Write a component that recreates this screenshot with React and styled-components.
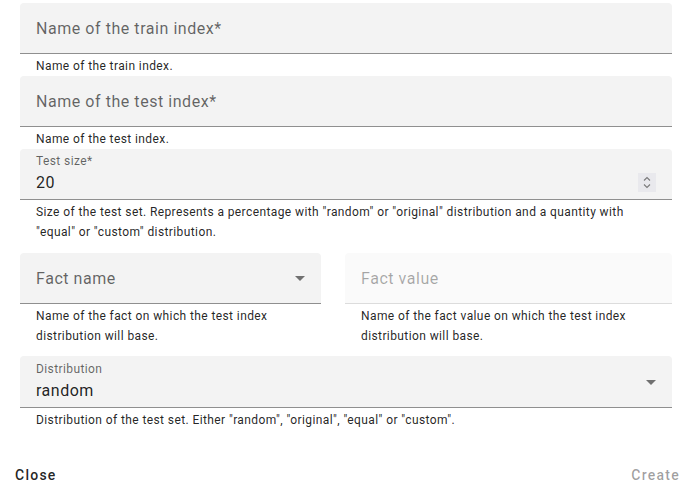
import React from 'react';
import styled, { createGlobalStyle } from 'styled-components';

const GlobalStyle = createGlobalStyle`
body {
    margin: 0;
    background: #fff;
    font-family: Roboto, "Noto Sans", sans-serif;
}
`

const App = () => {
    return (
        <>
            <GlobalStyle />
            <Form>
                <FieldGroup>
                    <Field>
                        <Placeholder>Name of the train index*</Placeholder>
                    </Field>
                    <Helper>Name of the train index.</Helper>
                </FieldGroup>

                <FieldGroup>
                    <Field>
                        <Placeholder>Name of the test index*</Placeholder>
                    </Field>
                    <Helper>Name of the test index.</Helper>
                </FieldGroup>

                <FieldGroup $space={11}>
                    <Field $filled $top={4}>
                        <SmallLabel>Test size*</SmallLabel>
                        <ValueRow>
                            <Value>20</Value>
                            <Spinner>
                                <svg width='8' height='13' viewBox='0 0 8 13'>
                                    <path d='M1 4.5 L4 1.5 L7 4.5' fill='none' stroke='#7a7a7a' strokeWidth='1.1' />
                                    <path d='M1 8.5 L4 11.5 L7 8.5' fill='none' stroke='#7a7a7a' strokeWidth='1.1' />
                                </svg>
                            </Spinner>
                        </ValueRow>
                    </Field>
                    <Helper>
                        Size of the test set. Represents a percentage with "random" or "original" distribution and a quantity with "equal" or "custom" distribution.
                    </Helper>
                </FieldGroup>

                <FactRow>
                    <FieldGroup>
                        <Field>
                            <Placeholder>Fact name</Placeholder>
                            <DropArrow />
                        </Field>
                        <Helper>Name of the fact on which the test index distribution will base.</Helper>
                    </FieldGroup>
                    <FieldGroup>
                        <Field $disabled>
                            <Placeholder $disabled>Fact value</Placeholder>
                        </Field>
                        <Helper>Name of the fact value on which the test index distribution will base.</Helper>
                    </FieldGroup>
                </FactRow>

                <FieldGroup>
                    <Field $filled $top={5} $height={52}>
                        <SmallLabel>Distribution</SmallLabel>
                        <Value>random</Value>
                        <DropArrow />
                    </Field>
                    <Helper>Distribution of the test set. Either "random", "original", "equal" or "custom".</Helper>
                </FieldGroup>
            </Form>

            <Actions>
                <TextButton>Close</TextButton>
                <TextButton $disabled>Create</TextButton>
            </Actions>
        </>
    );
};

export default App;

const DropArrow = () => (
    <ArrowBox>
        <svg width='24' height='24' viewBox='0 0 24 24'>
            <path d='M7 10l5 5 5-5z' fill='rgba(0,0,0,0.54)' />
        </svg>
    </ArrowBox>
)

const Form = styled.div`
display: flex;
flex-direction: column;
padding: 3px 20px 0 20px;
`

const FieldGroup = styled.div`
display: flex;
flex-direction: column;
margin: 0 0 ${p => p.$space || 0}px 0;
`

const FactRow = styled.div`
display: grid;
grid-template-columns: 301px 1fr;
column-gap: 24px;
margin: 0 0 10px 0;
`

const Field = styled.div`
position: relative;
box-sizing: border-box;
height: ${p => p.$height || 51}px;
padding: ${p => p.$filled ? `${p.$top}px 16px 0 16px` : '0 16px'};
display: flex;
flex-direction: ${p => p.$filled ? 'column' : 'row'};
align-items: ${p => p.$filled ? 'stretch' : 'center'};
background: ${p => p.$disabled ? '#fafafa' : '#f3f3f3'};
border-radius: 4px 4px 0 0;
border-bottom: 1px solid ${p => p.$disabled ? '#dcdcdc' : '#8f8f8f'};
`

const Placeholder = styled.span`
font-size: 16px;
line-height: 23px;
letter-spacing: 0.55px;
color: ${p => p.$disabled ? 'rgba(0, 0, 0, 0.34)' : 'rgba(0, 0, 0, 0.6)'};
`

const SmallLabel = styled.span`
font-size: 12px;
line-height: 16px;
letter-spacing: 0.4px;
color: rgba(0, 0, 0, 0.6);
margin: 0 0 2px 0;
`

const ValueRow = styled.div`
display: flex;
align-items: center;
`

const Value = styled.span`
flex: 1;
font-size: 16px;
line-height: 23px;
letter-spacing: 0.5px;
color: rgba(0, 0, 0, 0.87);
`

const Spinner = styled.span`
display: flex;
align-items: center;
justify-content: center;
width: 18px;
height: 19px;
background: #e9e9ed;
`

const ArrowBox = styled.span`
position: absolute;
right: 9px;
top: 50%;
transform: translateY(-50%);
display: flex;
`

const Helper = styled.p`
margin: 2px 0 0 0;
padding: 0 16px;
font-size: 12px;
line-height: 20px;
letter-spacing: 0.4px;
color: rgba(0, 0, 0, 0.87);
`

const Actions = styled.div`
display: flex;
justify-content: space-between;
align-items: center;
margin: 27px 4px 0 7px;
`

const TextButton = styled.button`
height: 36px;
padding: 6px 8px;
border: none;
background: transparent;
font-family: Roboto, "Noto Sans", sans-serif;
font-size: 14px;
font-weight: 500;
letter-spacing: 1.25px;
color: ${p => p.$disabled ? 'rgba(0, 0, 0, 0.38)' : 'rgba(0, 0, 0, 0.87)'};
cursor: ${p => p.$disabled ? 'default' : 'pointer'};
`
